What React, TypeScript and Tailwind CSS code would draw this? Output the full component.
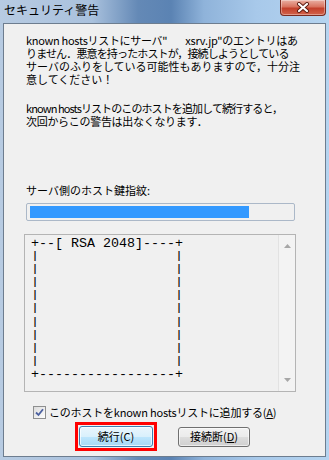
import React from "react";

const jp = "font-['Noto_Sans_CJK_JP','Noto_Sans',sans-serif]";

const Bar = () => <span className="inline-block scale-y-[0.8]">|</span>;

function CloseButton() {
  return (
    <div className="absolute right-[3px] top-0 flex h-[16px] w-[46px] items-center justify-center rounded-b-[4px] border border-t-0 border-[#7a2a1f] bg-[linear-gradient(180deg,#eab0a3_0%,#d9735f_45%,#c3402b_55%,#d2634c_100%)] shadow-[inset_0_0_0_1px_rgba(255,255,255,0.35)]">
      <svg width="14" height="11" viewBox="0 0 14 11">
        <path d="M3 2 L11 9 M11 2 L3 9" stroke="#5a1a10" strokeWidth="4" strokeLinecap="round" />
        <path d="M3 2 L11 9 M11 2 L3 9" stroke="#ffffff" strokeWidth="2.2" strokeLinecap="round" />
      </svg>
    </div>
  );
}

function Checkbox() {
  return (
    <div className="flex h-[13px] w-[13px] shrink-0 items-center justify-center border border-[#8e8f8f] bg-[linear-gradient(135deg,#dcdcdc,#fdfdfd)]">
      <svg width="9" height="9" viewBox="0 0 9 9">
        <path d="M1 4.5 L3.5 7 L8 1.2" stroke="#4c61a0" strokeWidth="1.8" fill="none" />
      </svg>
    </div>
  );
}

export default function App() {
  return (
    <div className={`relative h-[460px] w-[329px] overflow-hidden bg-[linear-gradient(90deg,#b7cbe2_0%,#a9c1dd_28%,#6489b6_42%,#5b83b3_52%,#8fb3da_62%,#a8c9ea_78%,#b5d4f0_100%)] ${jp}`}>
      {/* title bar */}
      <div className="flex h-[23px] items-start pl-[4px] pt-[3px]">
        <span className="text-[12px] leading-[14px] text-black">セキュリティ警告</span>
      </div>
      <CloseButton />

      {/* client area */}
      <div className="ml-[3px] mr-[3px] flex h-[434px] flex-col border border-[#6d7d8f] bg-[#f0f0f0] text-[11px] text-black">
        <div className="mt-[10px] pl-[22px] leading-[13px] whitespace-nowrap">
          <div className="flex">
            <span className="tracking-[-0.3px]">known hostsリストにサーバ"</span>
            <span className="w-[18px]" />
            <span className="tracking-[-0.2px]">xsrv.jp"のエントリはあ</span>
          </div>
          <div className="tracking-[-0.85px]">りません．悪意を持ったホストが，接続しようとしている</div>
          <div>サーバのふりをしている可能性もありますので，十分注</div>
          <div>意してください！</div>
        </div>
        <div className="mt-[16px] pl-[22px] leading-[13px] whitespace-nowrap">
          <div className="tracking-[-0.9px]">known hostsリストのこのホストを追加して続行すると，</div>
          <div className="tracking-[-0.3px]">次回からこの警告は出なくなります．</div>
        </div>

        <div className="mt-[56px] pl-[22px] leading-[13px]">サーバ側のホスト鍵指紋:</div>

        <div className="ml-[22px] mt-[6px] h-[18px] w-[269px] rounded-[2px] border border-[#abb8c8] bg-[#f0f0f0] pl-[3px] pt-[2px]">
          <div className="h-[12px] w-[219px] bg-[#3399ff]" />
        </div>

        <div className="ml-[20px] mt-[13px] flex h-[158px] w-[272px] border border-[#b4b4b4] bg-[#f0f0f0]">
          <div className="flex-1 whitespace-pre pl-[6px] pt-[2px] font-['Liberation_Mono',monospace] text-[13.33px] leading-[13.1px] text-black">
            <div>+--[ RSA 2048]----+</div>
            {Array.from({ length: 9 }, (_, i) => (
              <div key={i}>
                <Bar />
                {"                 "}
                <Bar />
              </div>
            ))}
            <div>+-----------------+</div>
          </div>
          <div className="flex w-[17px] flex-col items-center justify-between border-l border-[#e2e2e2] bg-[#f3f3f3] py-[9px]">
            <svg width="7" height="4" viewBox="0 0 7 4">
              <path d="M0 4 L3.5 0 L7 4 Z" fill="#a7a7a7" />
            </svg>
            <svg width="7" height="4" viewBox="0 0 7 4">
              <path d="M0 0 L3.5 4 L7 0 Z" fill="#a7a7a7" />
            </svg>
          </div>
        </div>

        <div className="ml-[29px] mt-[14px] flex items-center gap-[3px] leading-[13px]">
          <Checkbox />
          <span className="whitespace-nowrap tracking-[-0.2px]">
            このホストをknown hostsリストに追加する(<span className="underline">A</span>)
          </span>
        </div>

        <div className="ml-[71px] mt-[3px] flex items-center gap-[21px]">
          <div className="border-[3px] border-[#ff0000] p-[1px]">
            <div className="flex h-[21px] w-[74px] items-center justify-center rounded-[3px] border border-[#3c7fb1] bg-[linear-gradient(180deg,#eaf6fd_0%,#d9f0fc_50%,#bee6fd_51%,#a7d9f5_100%)] shadow-[inset_0_0_0_1px_rgba(255,255,255,0.7)]">
              続行(C)
            </div>
          </div>
          <div className="flex h-[20px] w-[72px] items-center justify-center rounded-[3px] border border-[#707070] bg-[linear-gradient(180deg,#f2f2f2_0%,#ebebeb_50%,#dddddd_51%,#cfcfcf_100%)] shadow-[inset_0_0_0_1px_rgba(255,255,255,0.6)]">
            接続断(<span className="underline">D</span>)
          </div>
        </div>
      </div>
    </div>
  );
}
